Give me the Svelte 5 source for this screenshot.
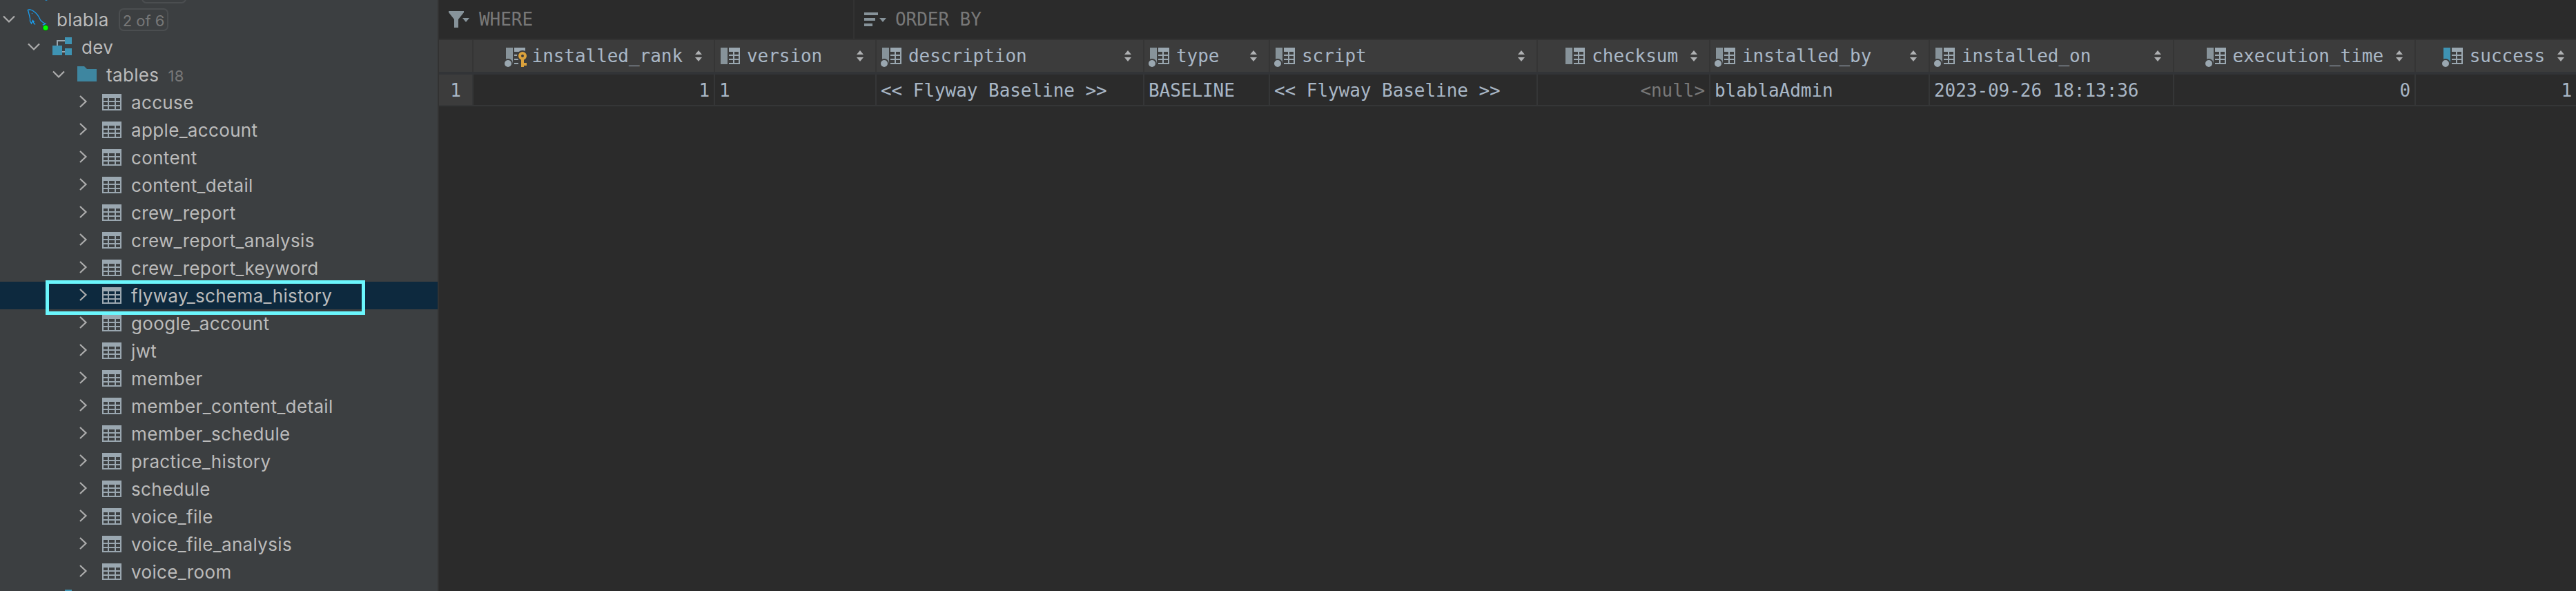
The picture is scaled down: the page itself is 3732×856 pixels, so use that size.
<script>
    const tables = [
        'accuse',
        'apple_account',
        'content',
        'content_detail',
        'crew_report',
        'crew_report_analysis',
        'crew_report_keyword',
        'flyway_schema_history',
        'google_account',
        'jwt',
        'member',
        'member_content_detail',
        'member_schedule',
        'practice_history',
        'schedule',
        'voice_file',
        'voice_file_analysis',
        'voice_room',
    ];

    // kind: 'key' = primary key, 'plain' = nullable, 'dot' = not null, 'index' = indexed
    const columns = [
        { name: 'installed_rank', value: '1', width: 350, kind: 'key', right: true },
        { name: 'version', value: '1', width: 234, kind: 'plain' },
        { name: 'description', value: '<< Flyway Baseline >>', width: 388, kind: 'dot' },
        { name: 'type', value: 'BASELINE', width: 182, kind: 'dot' },
        { name: 'script', value: '<< Flyway Baseline >>', width: 388, kind: 'dot' },
        { name: 'checksum', value: null, width: 250, kind: 'plain', right: true },
        { name: 'installed_by', value: 'blablaAdmin', width: 318, kind: 'dot' },
        { name: 'installed_on', value: '2023-09-26 18:13:36', width: 354, kind: 'dot' },
        { name: 'execution_time', value: '0', width: 350, kind: 'dot', right: true },
        { name: 'success', value: '1', width: 234, kind: 'index', right: true },
    ];

    const gridColumns = '50px ' + columns.map((c) => c.width + 'px').join(' ');

    let selected = $state('flyway_schema_history');
</script>

{#snippet chevronDown()}
    <svg class="chevron" width="24" height="24" viewBox="0 0 24 24">
        <path d="M4 7.500L12 15.500L20 7.500" />
    </svg>
{/snippet}

{#snippet schemaIcon()}
    <svg width="32" height="32" viewBox="0 0 32 32">
        <path d="M9 14V7H20M16 23H20" fill="none" stroke="#9aa7b0" stroke-width="2" />
        <path d="M20 2h10v10H20zM2 14h14v14H2zM20 18h10v10H20z" fill="#3e93b3" />
    </svg>
{/snippet}

<div class="ide">
    <aside class="sidebar">
        <div class="row cut-top">
            <svg class="sliver" width="4" height="2" viewBox="0 0 4 2"><path d="M0 0h4L2 1z" fill="#1a9ff0" /></svg>
            <span class="badge"></span>
        </div>

        <div class="row level-0">
            {@render chevronDown()}
            <svg width="32" height="32" viewBox="0 0 32 32">
                <path
                    d="M11.500 20L9.500 17.500L7.500 22L5.500 18.500C6.500 14 4 10 3.500 6L2.300 2.500C4 1.500 8 2 11 4.500C15.500 7.500 18 11 20.300 16.500C21.500 19 24 20.500 28 22.500L24.500 24L27 26M9.500 17.500L10.500 21L13 23.500"
                    fill="none"
                    stroke="#1a9ff0"
                    stroke-width="1.300"
                />
                <circle cx="8.500" cy="7.500" r="0.700" fill="#1a9ff0" />
                <circle cx="28" cy="28.300" r="4.500" fill="#1c541b" />
                <circle cx="28" cy="28.300" r="3.500" fill="#00ff00" />
            </svg>
            <span class="label">blabla</span>
            <span class="badge">2 of 6</span>
        </div>

        <div class="row level-1">
            {@render chevronDown()}
            {@render schemaIcon()}
            <span class="label">dev</span>
        </div>

        <div class="row level-2">
            {@render chevronDown()}
            <svg width="32" height="32" viewBox="0 0 32 32">
                <path d="M2 4h10l4 4h14v18H2z" fill="#3e86a0" />
            </svg>
            <span class="label">tables</span>
            <span class="count">18</span>
        </div>

        {#each tables as table}
            <!-- svelte-ignore a11y_click_events_have_key_events, a11y_no_static_element_interactions -->
            <div class="row level-3" class:selected={selected === table} onclick={() => (selected = table)}>
                <svg class="chevron" width="24" height="24" viewBox="0 0 24 24">
                    <path d="M7 3L15.500 11L7 19" />
                </svg>
                <svg width="32" height="32" viewBox="0 0 32 32">
                    <path d="M2 4h28v24H2z" fill="#9aa7b0" />
                    <path
                        class="holes"
                        d="M4 10h6v4H4zM12 10h8v4h-8zM22 10h6v4h-6zM4 16h6v4H4zM12 16h8v4h-8zM22 16h6v4h-6zM4 22h6v4H4zM12 22h8v4h-8zM22 22h6v4h-6z"
                    />
                </svg>
                <span class="label">{table}</span>
            </div>
        {/each}

        <div class="row next-schema">
            {@render schemaIcon()}
        </div>

        <div class="highlight"></div>
    </aside>

    <main class="editor">
        <div class="filters">
            <div class="filter where">
                <svg width="32" height="32" viewBox="0 0 32 32">
                    <path d="M1 4h22v2L15 16v12H9V16L1 6zM21 14h10l-5 6z" fill="#87939a" />
                </svg>
                <span>WHERE</span>
            </div>
            <div class="filter order">
                <svg width="34" height="32" viewBox="0 0 34 32">
                    <path d="M1 6h20v4H1zM1 14h16v4H1zM1 22h12v4H1zM23 14h10l-5 6z" fill="#87939a" />
                </svg>
                <span>ORDER BY</span>
            </div>
        </div>

        <div class="grid header" style="grid-template-columns: {gridColumns}">
            <div class="th corner"></div>
            {#each columns as col}
                <div class="th" class:right={col.right}>
                    <svg width="32" height="32" viewBox="0 0 32 32">
                        <path d="M2 4h10v24H2z" fill={col.kind === 'index' ? '#3e93b3' : '#87939a'} />
                        {#if col.kind === 'key'}
                            <path d="M14 4h16v6H14zM14 14h5v2h-5zM14 20h6v2h-6zM14 26h6v2h-6z" fill="#9aa7b0" />
                            <circle cx="26" cy="16" r="8" fill="#3c3c3c" />
                            <path d="M24 20h4v6h4v4h-4v2h-4z" fill="#dba23c" />
                            <circle cx="26" cy="16" r="4" fill="none" stroke="#dba23c" stroke-width="4" />
                        {:else}
                            <path d="M14 4h16v24H14z" fill="#9aa7b0" />
                            <path
                                d="M14 10h6v4h-6zM22 10h6v4h-6zM14 16h6v4h-6zM22 16h6v4h-6zM14 22h6v4h-6zM22 22h6v4h-6z"
                                fill="#3c3c3c"
                            />
                        {/if}
                        {#if col.kind !== 'plain'}
                            <circle cx="5" cy="27" r="7" fill="#3c3c3c" />
                            <circle cx="5" cy="27" r="5" fill="#9aa7b0" />
                        {/if}
                    </svg>
                    <span class="name">{col.name}</span>
                    <svg class="sort" width="10" height="16" viewBox="0 0 10 16">
                        <path d="M0 6L5 0L10 6zM0 10L5 16L10 10z" />
                    </svg>
                </div>
            {/each}
        </div>

        <div class="grid data" style="grid-template-columns: {gridColumns}">
            <div class="td number">1</div>
            {#each columns as col}
                <div class="td" class:right={col.right} class:null={col.value === null}>{col.value ?? '<null>'}</div>
            {/each}
        </div>
    </main>
</div>

<style>
    :global(body) {
        background: #2b2b2b;
        overflow: hidden;
    }

    .ide {
        display: flex;
        width: 3732px;
        height: 856px;
        overflow: hidden;
    }

    svg {
        display: block;
        flex: none;
        overflow: visible;
    }

    /* Database tree */
    .sidebar {
        position: relative;
        box-sizing: border-box;
        width: 636px;
        height: 856px;
        flex: none;
        overflow: hidden;
        background: #3c3f41;
        border-right: 2px solid #323232;
        color: #bbbbbb;
        font: 26px/40px Inter, "Noto Sans", sans-serif;
        letter-spacing: 0.35px;
    }

    .row {
        display: flex;
        align-items: center;
        height: 40px;
        white-space: pre;
    }

    .cut-top {
        height: 8px;
        align-items: flex-end;
    }
    .cut-top .sliver {
        align-self: flex-start;
        margin-left: 65px;
    }
    .cut-top .badge {
        flex: none;
        margin: 0 0 3px 136px;
        width: 65px;
    }

    .level-0 {
        padding-left: 1px;
    }
    .level-1 {
        padding-left: 37px;
    }
    .level-2 {
        padding-left: 73px;
    }
    .level-3 {
        padding-left: 109px;
    }
    .next-schema {
        padding-left: 74px;
    }

    .selected {
        background: #0d293e;
    }

    .chevron {
        margin-right: 13px;
    }
    .chevron path {
        fill: none;
        stroke: #adadad;
        stroke-width: 2.2;
    }

    .holes {
        fill: #3c3f41;
    }
    .selected .holes {
        fill: #0d293e;
    }

    .label {
        margin-left: 12px;
        padding-top: 2px;
    }

    .badge {
        box-sizing: border-box;
        height: 33px;
        margin-left: 14px;
        padding: 0 3px 0 4px;
        border: 2px solid #4b4e50;
        border-radius: 7px;
        color: #787878;
        font-size: 22px;
        line-height: 33px;
        letter-spacing: 0;
    }

    .count {
        margin-left: 13px;
        padding-top: 4px;
        color: #787878;
        font-size: 22px;
    }

    .highlight {
        position: absolute;
        left: 66px;
        top: 406px;
        box-sizing: border-box;
        width: 463px;
        height: 50px;
        border: 5px solid #6bf6fd;
    }

    /* Result grid */
    .editor {
        flex: 1;
        min-width: 0;
        overflow: hidden;
        color: #a9b7c6;
        font: 26px/46px "DejaVu Sans Mono", monospace;
        letter-spacing: -0.05px;
    }

    .filters {
        display: flex;
        height: 56px;
        border-bottom: 2px solid #323232;
        color: #787878;
    }
    .filter {
        display: flex;
        align-items: center;
        gap: 12px;
        box-sizing: border-box;
        padding-left: 13px;
    }
    .where {
        gap: 13px;
        width: 602px;
        border-right: 2px solid #323232;
    }

    .grid {
        display: grid;
        width: 3098px;
    }

    .header {
        height: 46px;
        border-bottom: 4px solid #323437;
    }

    .th {
        display: flex;
        align-items: center;
        box-sizing: border-box;
        padding: 0 17px 0 6px;
        background: #3c3c3c;
        border-right: 2px solid #353535;
    }
    .th .name {
        margin: 0 auto 0 8px;
    }
    .th.right {
        justify-content: flex-end;
    }
    .th.right .name {
        margin-right: 18px;
    }

    .sort {
        fill: #afb1b3;
    }

    .data {
        height: 46px;
    }

    .td {
        box-sizing: border-box;
        height: 46px;
        padding: 0 6px;
        border-right: 2px solid #353637;
        border-bottom: 2px solid #353637;
        white-space: pre;
    }
    .td.right {
        text-align: right;
    }
    .td.null {
        color: #787878;
    }
    .number {
        background: #3c3c3c;
        text-align: center;
    }
</style>
